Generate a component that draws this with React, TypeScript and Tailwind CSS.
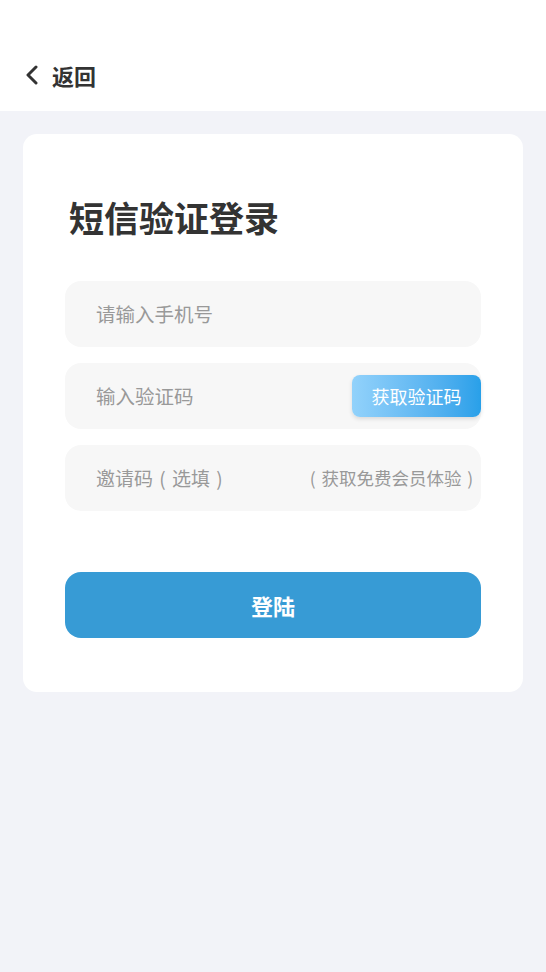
import React from "react";

export default function App() {
  const font = { fontFamily: '"Noto Sans CJK SC", "Noto Sans", sans-serif' };
  return (
    <div className="min-h-[972px] w-full bg-[#f2f3f8]" style={font}>
      <div className="h-[111px] bg-white flex items-end">
        <div className="flex items-center h-[72px] pb-[1px] pl-[24px]">
          <svg width="18" height="20" viewBox="0 0 18 20" fill="none">
            <path d="M12 2 L4 10 L12 18" stroke="#333" strokeWidth="3" strokeLinecap="round" strokeLinejoin="round" />
          </svg>
          <span className="ml-[10px] text-[22px] font-bold text-[#333] leading-none">返回</span>
        </div>
      </div>
      <div className="px-[23px] pt-[23px]">
        <div className="bg-white rounded-[14px] px-[42px] pt-[65px] pb-[54px]">
          <h1 className="text-[35px] font-bold text-[#333] leading-none pl-[4px]">短信验证登录</h1>
          <div className="mt-[47px] flex flex-col gap-[16px]">
            <div className="h-[66px] rounded-[16px] bg-[#f7f7f7] flex items-center pl-[31px]">
              <span className="text-[19.5px] text-[#999]">请输入手机号</span>
            </div>
            <div className="h-[66px] rounded-[16px] bg-[#f7f7f7] flex items-center justify-between pl-[31px]">
              <span className="text-[19.5px] text-[#999]">输入验证码</span>
              <div className="h-[42px] w-[129px] rounded-[8px] bg-gradient-to-r from-[#92d2fb] to-[#28a0e9] flex items-center justify-center shadow-[0_2px_4px_rgba(0,0,0,0.12)]">
                <span className="text-[18px] text-white">获取验证码</span>
              </div>
            </div>
            <div className="h-[66px] rounded-[16px] bg-[#f7f7f7] flex items-center justify-between pl-[31px] pr-[2px]">
              <span className="text-[19px] text-[#999] whitespace-nowrap">
                邀请码<span className="inline-block w-[1em] text-center">(</span>选填<span className="inline-block w-[1em] text-center">)</span>
              </span>
              <span className="text-[17.5px] text-[#999] whitespace-nowrap">
                <span className="inline-block w-[1em] text-center">(</span>获取免费会员体验<span className="inline-block w-[1em] text-center">)</span>
              </span>
            </div>
          </div>
          <button className="mt-[61px] w-full h-[66px] rounded-[16px] bg-[#379bd5] flex items-center justify-center">
            <span className="text-[22px] font-bold text-white">登陆</span>
          </button>
        </div>
      </div>
    </div>
  );
}
